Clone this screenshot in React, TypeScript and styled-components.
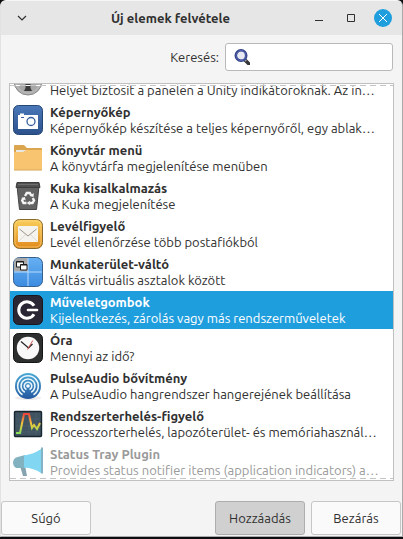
import React, { useLayoutEffect, useRef, useState } from 'react';
import styled, { createGlobalStyle, css } from 'styled-components';

const GlobalStyle = createGlobalStyle`
  * { box-sizing: border-box; }
  html, body, #root { height: 100%; }
  body {
    margin: 0;
    background: #0c0d0f;
    color: #303030;
    font: 13px/16px Ubuntu, "Noto Sans", sans-serif;
  }
  button, input { font: inherit; color: inherit; }
`;

const Dialog = styled.main`
  display: flex;
  flex-direction: column;
  height: calc(100% - 2px);
  border: 1px solid #a9a9a9;
  border-top-color: #f6f6f6;
  border-left-color: #e2e2e2;
  border-radius: 6px 6px 0 0;
  background: #f4f4f4;
  overflow: hidden;
`;

const TitleBar = styled.header`
  display: flex;
  align-items: center;
  flex: none;
  height: 34px;
  padding: 0 10px 0 12px;
  background: #e6e6e6;
`;

const Title = styled.h1`
  flex: 1;
  margin: 0;
  font-size: 13px;
  font-weight: 700;
  text-align: center;
  white-space: nowrap;
`;

const WindowControls = styled.div`
  display: flex;
  justify-content: flex-end;
  gap: 14px;
`;

const WindowButton = styled.button<{ $accent?: boolean }>`
  display: grid;
  place-items: center;
  width: 18px;
  height: 18px;
  margin: 0;
  padding: 0;
  border: 0;
  border-radius: 50%;
  background: ${(p) => (p.$accent ? '#1f9ede' : 'transparent')};
  color: ${(p) => (p.$accent ? '#ffffff' : '#303030')};
`;

const SearchRow = styled.div`
  display: flex;
  justify-content: flex-end;
  align-items: center;
  flex: none;
  gap: 6px;
  padding: 8px 9px 12px;
`;

const SearchField = styled.div`
  display: flex;
  align-items: center;
  gap: 6px;
  width: 168px;
  height: 28px;
  padding: 0 8px;
  border: 1px solid #b9b9b9;
  border-radius: 3px;
  background: #ffffff;
`;

const SearchInput = styled.input`
  flex: 1;
  min-width: 0;
  padding: 0;
  border: 0;
  outline: 0;
  background: transparent;
`;

const edge = css`
  content: '';
  position: absolute;
  left: 0;
  right: 0;
  height: 1px;
  background: repeating-linear-gradient(90deg, #c4c4c4 0 6px, #ffffff 6px 10px);
  pointer-events: none;
`;

const ListFrame = styled.section`
  position: relative;
  display: flex;
  flex: 1;
  min-height: 0;
  margin: 0 8px;
  border: 1px solid #c0c0c0;
  background: #ffffff;
  &::before { ${edge} top: 1px; }
  &::after { ${edge} bottom: 1px; }
`;

const List = styled.ul`
  flex: 1;
  min-width: 0;
  margin: 0;
  padding: 0;
  overflow-y: auto;
  scrollbar-width: none;
  list-style: none;
`;

const Item = styled.li<{ $selected: boolean; $disabled?: boolean }>`
  display: flex;
  align-items: center;
  gap: 6px;
  height: 38px;
  padding: 0 5px 0 2px;
  background: ${(p) => (p.$selected ? '#1f9ede' : 'transparent')};
  color: ${(p) => (p.$selected ? '#ffffff' : p.$disabled ? '#9a9a9a' : '#303030')};
  cursor: default;
`;

const ItemIcon = styled.svg`
  flex: none;
  width: 32px;
  height: 32px;
`;

const ItemText = styled.div`
  flex: 1;
  min-width: 0;
`;

const Name = styled.div`
  font-weight: 700;
  white-space: nowrap;
`;

const Description = styled.div`
  overflow: hidden;
  text-overflow: ellipsis;
  white-space: nowrap;
`;

const Actions = styled.footer`
  display: flex;
  flex: none;
  gap: 6px;
  padding: 20px 1px 1px 0;
`;

const ActionButton = styled.button<{ $primary?: boolean }>`
  width: 90px;
  height: 34px;
  padding: 0;
  border: 1px solid ${(p) => (p.$primary ? '#adadad' : '#c6c6c6')};
  border-radius: 3px;
  background: ${(p) => (p.$primary ? '#d0d0d0' : '#fafafa')};
`;

const HelpButton = styled(ActionButton)`
  margin-right: auto;
`;

const IndicatorIcon = () => (
  <>
    <circle cx="16" cy="15" r="14" fill="#b4b4b4" stroke="#858585" />
    <circle cx="16" cy="15" r="11" fill="#a6a6a6" />
    <path d="M13.5 12h5v10l1.5 3h-8l1.500-3z" fill="#3a3a3a" />
  </>
);

const CameraIcon = () => (
  <>
    <rect x="1.5" y="1.5" width="29" height="29" rx="5" fill="url(#camera)" stroke="#254775" />
    <path d="M6 11h2V9.5h4V11h14v14H6z" fill="#fff" />
    <circle cx="19" cy="17.5" r="4" fill="#fff" stroke="#345f9c" strokeWidth="1.3" />
    <path d="M9 13.5h3" stroke="#345f9c" />
  </>
);

const FolderIcon = () => (
  <>
    <path d="M2 4q0-1 1-1h9l3 3h14q1 0 1 1v10H2z" fill="#dca650" />
    <path d="M4 8h25v6H4z" fill="#e8e8e4" />
    <path d="M2 11q0-1 1-1h8l3-2h15q1 0 1 1v19H2z" fill="#f8c470" />
    <path d="M2 28h28" stroke="#dba85a" />
  </>
);

const TrashIcon = () => (
  <>
    <path d="M5 6h22l-2.5 23.5h-17z" fill="#636363" stroke="#454545" />
    <path d="M5 2.5h22l1 5H4z" fill="#505050" stroke="#3d3d3d" />
    <path d="M6 4.5h20" stroke="#6e6e6e" />
    <g fill="none" stroke="#f5f5f5" strokeWidth="2.4">
      <path d="M13 16l1.8-3h3l1.5 2.5" />
      <path d="M20.8 18l1.2 2.5-1.5 2.5h-3" />
      <path d="M14.5 23h-3L10.2 20.5l1.3-2.5" />
    </g>
    <path d="M17.5 16l4 1 .3-4zM17.8 20.7v4.6l-3-2.3zM9.2 18l3.6-1 1 3.6z" fill="#f5f5f5" />
  </>
);

const MailIcon = () => (
  <>
    <rect x="1.5" y="1.5" width="29" height="29" rx="6" fill="url(#mail)" stroke="#8a6a2c" />
    <rect x="3" y="3" width="26" height="26" rx="5" fill="none" stroke="#ffd985" strokeOpacity=".6" />
    <rect x="6" y="8" width="20" height="16" rx="1" fill="#f5f3ed" />
    <path d="M7 23l7-7m11 7l-7-7" stroke="#dedbd3" />
    <path d="M7.5 11l8.5 7 8.5-7" fill="none" stroke="#9c978d" />
  </>
);

const WorkspaceIcon = () => (
  <>
    <rect x="1.5" y="1.5" width="29" height="29" rx="6" fill="url(#desk)" stroke="#355f8d" />
    <path d="M2 15.5V7q0-5 5-5h9v13.5z" fill="#a9a9a9" />
    <path d="M16 2v28M2 16h28" stroke="#b6dbff" />
    <path d="M4.5 5.5h7V11h-7z" fill="#fff" stroke="#1c1c1c" />
    <path d="M8.5 8.5H15V14H8.5z" fill="#fff" stroke="#1c1c1c" />
    <path d="M8.5 9H15M4.5 6h7" stroke="#1c1c1c" />
  </>
);

const ActionsIcon = () => (
  <>
    <rect x="1.5" y="1.5" width="29" height="29" rx="5" fill="#2b2633" stroke="#18151c" />
    <path d="M22 11.8A8.2 8.2 0 1 0 22 20.2" fill="none" stroke="#fff" strokeWidth="3" />
    <path d="M16 16h9" stroke="#fff" strokeWidth="2.6" strokeLinecap="round" />
  </>
);

const ClockIcon = () => (
  <>
    <rect x="1.5" y="1.5" width="29" height="29" rx="5" fill="#2d2f2e" stroke="#151515" />
    <circle cx="16" cy="16" r="11.2" fill="#f8f8f8" />
    <path d="M9 9.5l7.5 6.5 4-4" fill="none" stroke="#222" strokeWidth="1.2" />
    <path d="M15.5 17.5L20.8 8.5" stroke="#d94444" strokeWidth=".9" />
  </>
);

const AudioIcon = () => (
  <>
    <ellipse cx="16" cy="28" rx="13" ry="2" fill="#ececec" />
    <circle cx="16" cy="16" r="13" fill="url(#audio)" />
    <g fill="none" stroke="#eaf6fc" strokeWidth="1.6">
      <path d="M10.5 24.8a10.3 10.3 0 1 1 11 0" />
      <path d="M12.8 22.2a7 7 0 1 1 6.4 0" />
      <path d="M14.5 19.5a3.8 3.8 0 1 1 3 0" />
    </g>
    <circle cx="16" cy="16" r="1.8" fill="#fff" />
  </>
);

const LoadIcon = () => (
  <>
    <rect x="2.5" y="3.5" width="27" height="25" rx="1" fill="#405361" stroke="#17252f" strokeWidth="1.4" />
    <path d="M4 11h24M4 18h24M4 24h24M10 5v22M17 5v22M24 5v22" stroke="#4d6271" strokeWidth=".6" />
    <path d="M4 25h4l4-19h5l3 14 2-3 3 4 3-6" fill="none" stroke="url(#load)" strokeWidth="2" />
  </>
);

const MegaphoneIcon = () => (
  <>
    <path d="M8 20l5-1 2 11h-4z" fill="#86a4af" />
    <path d="M13 9v13H4q-3-2-3-5 0-4 3-5.5z" fill="#82b1c0" />
    <path d="M12 9.5Q22 8 29 3v24q-7-5-17-5.5z" fill="#81d6f1" />
    <path d="M29 1.5h2v26h-2z" fill="#83b4c5" />
  </>
);

const entries = [
  { name: 'Jelző bővítmény', text: 'Helyet biztosít a panelen a Unity indikátoroknak. Az in…', Icon: IndicatorIcon },
  { name: 'Képernyőkép', text: 'Képernyőkép készítése a teljes képernyőről, egy ablak…', Icon: CameraIcon },
  { name: 'Könyvtár menü', text: 'A könyvtárfa megjelenítése menüben', Icon: FolderIcon },
  { name: 'Kuka kisalkalmazás', text: 'A Kuka megjelenítése', Icon: TrashIcon },
  { name: 'Levélfigyelő', text: 'Levél ellenőrzése több postafiókból', Icon: MailIcon },
  { name: 'Munkaterület-váltó', text: 'Váltás virtuális asztalok között', Icon: WorkspaceIcon },
  { name: 'Műveletgombok', text: 'Kijelentkezés, zárolás vagy más rendszerműveletek', Icon: ActionsIcon },
  { name: 'Óra', text: 'Mennyi az idő?', Icon: ClockIcon },
  { name: 'PulseAudio bővítmény', text: 'A PulseAudio hangrendszer hangerejének beállítása', Icon: AudioIcon },
  { name: 'Rendszerterhelés-figyelő', text: 'Processzorterhelés, lapozóterület- és memóriahasznál…', Icon: LoadIcon },
  { name: 'Status Tray Plugin', text: 'Provides status notifier items (application indicators) a…', Icon: MegaphoneIcon, disabled: true },
];

const gradients = [
  { id: 'camera', stops: ['#4a78b8', '#2c528c'] },
  { id: 'mail', stops: ['#f9cf5c', '#e08a1c'] },
  { id: 'desk', stops: ['#66b0f2', '#3c8be0'] },
  { id: 'audio', stops: ['#4aa9d6', '#2458a0'] },
  { id: 'load', stops: ['#f0453a', '#f2c63a', '#8be05a'] },
];

const Gradients = styled.svg`
  position: absolute;
  width: 0;
  height: 0;
`;

export default function App() {
  const listRef = useRef<HTMLUListElement>(null);
  const [selected, setSelected] = useState(6);

  useLayoutEffect(() => {
    if (listRef.current) listRef.current.scrollTop = 21;
  }, []);

  return (
    <>
      <GlobalStyle />
      <Gradients aria-hidden="true">
        <defs>
          {gradients.map((g) => (
            <linearGradient key={g.id} id={g.id} x1="0" y1="0" x2="0" y2="1">
              {g.stops.map((color, i) => (
                <stop key={color} offset={i / (g.stops.length - 1)} stopColor={color} />
              ))}
            </linearGradient>
          ))}
        </defs>
      </Gradients>
      <Dialog>
        <TitleBar>
          <WindowButton aria-label="Ablakmenü">
            <svg width="10" height="6" viewBox="0 0 10 6" fill="none" stroke="currentColor" strokeWidth="1.2">
              <path d="M1 1l4 4 4-4" />
            </svg>
          </WindowButton>
          <Title>Új elemek felvétele</Title>
          <WindowControls>
            <WindowButton aria-label="Kis méret">
              <svg width="8" height="6" viewBox="0 0 8 6"><path d="M0 5h8v1H0z" fill="currentColor" /></svg>
            </WindowButton>
            <WindowButton aria-label="Teljes méret">
              <svg width="8" height="8" viewBox="0 0 8 8"><path d="M.5.5h7v7h-7z" fill="none" stroke="currentColor" /></svg>
            </WindowButton>
            <WindowButton $accent aria-label="Ablak bezárása">
              <svg width="8" height="8" viewBox="0 0 8 8"><path d="M0 0l8 8M8 0L0 8" stroke="currentColor" /></svg>
            </WindowButton>
          </WindowControls>
        </TitleBar>
        <SearchRow>
          <label htmlFor="search">Keresés:</label>
          <SearchField>
            <svg width="16" height="16" viewBox="0 0 16 16" aria-hidden="true">
              <path d="M11 11l4 4" stroke="#34363a" strokeWidth="3.5" strokeLinecap="round" />
              <path d="M10 10l2 2" stroke="#aaa" strokeWidth="2" />
              <circle cx="7" cy="6.5" r="5.2" fill="#e6e8f4" stroke="#2e3c86" strokeWidth="2.6" />
              <circle cx="7" cy="6.5" r="5" fill="none" stroke="#6575bd" strokeWidth=".8" />
            </svg>
            <SearchInput id="search" type="text" />
          </SearchField>
        </SearchRow>
        <ListFrame>
          <List ref={listRef} role="listbox" aria-label="Új elemek felvétele">
            {entries.map(({ name, text, Icon, disabled }, i) => (
              <Item
                key={name}
                role="option"
                aria-selected={i === selected}
                aria-disabled={disabled}
                $selected={i === selected}
                $disabled={disabled}
                onClick={() => !disabled && setSelected(i)}
              >
                <ItemIcon viewBox="0 0 32 32" aria-hidden="true"><Icon /></ItemIcon>
                <ItemText>
                  <Name>{name}</Name>
                  <Description>{text}</Description>
                </ItemText>
              </Item>
            ))}
          </List>
        </ListFrame>
        <Actions>
          <HelpButton>Súgó</HelpButton>
          <ActionButton $primary>Hozzáadás</ActionButton>
          <ActionButton>Bezárás</ActionButton>
        </Actions>
      </Dialog>
    </>
  );
}
